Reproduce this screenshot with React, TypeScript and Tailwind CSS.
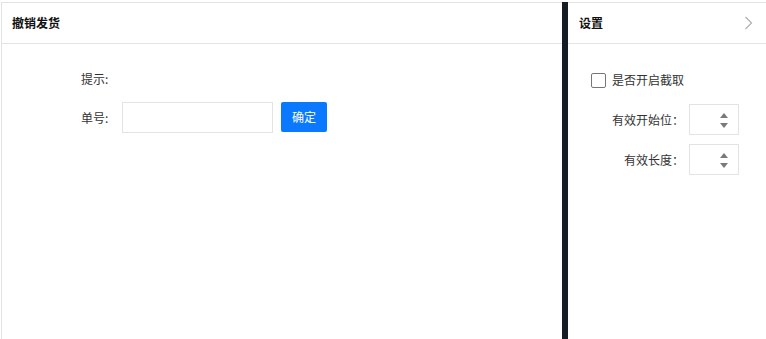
import React from 'react';

const FONT = '"Noto Sans CJK SC", "Liberation Sans", sans-serif';

function NumberBox() {
  return (
    <div className="relative h-[31px] w-[50px] border border-[#e3e3e3] bg-white">
      <div className="absolute right-[10px] top-[8px] flex flex-col items-center gap-[5px]">
        <svg width="8" height="5" viewBox="0 0 8 5">
          <path d="M4 0 L8 5 L0 5 Z" fill="#7a7a7a" />
        </svg>
        <svg width="8" height="5" viewBox="0 0 8 5">
          <path d="M0 0 L8 0 L4 5 Z" fill="#7a7a7a" />
        </svg>
      </div>
    </div>
  );
}

export default function App() {
  return (
    <div
      className="flex h-[339px] w-[766px] overflow-hidden bg-white pl-[1px] pt-[2px] text-[12px] text-[#333]"
      style={{ fontFamily: FONT }}
    >
      {/* left: cancel shipment */}
      <div className="flex w-[561px] flex-col border-l border-t border-[#e3e3e3]">
        <div className="flex h-[41px] items-center border-b border-[#e3e3e3] pl-[10px] font-bold text-[#111]">
          撤销发货
        </div>
        <div className="flex flex-col pl-[79px] pt-[26px]">
          <div className="flex h-[18px] items-center">提示:</div>
          <div className="mt-[14px] flex items-center">
            <span className="w-[41px]">单号:</span>
            <div className="h-[31px] w-[151px] border border-[#e3e3e3]" />
            <button className="ml-[8px] h-[30px] w-[46px] self-start rounded-[2px] bg-[#0a78ff] text-white">
              确定
            </button>
          </div>
        </div>
      </div>

      <div className="w-[6px] bg-[#141c24]" />

      {/* right: settings */}
      <div className="flex w-[198px] flex-col border-t border-[#e3e3e3]">
        <div className="flex h-[41px] items-center justify-between border-b border-[#e3e3e3] pl-[11px] pr-[13px] font-bold text-[#111]">
          <span>设置</span>
          <svg width="9" height="14" viewBox="0 0 9 14">
            <path d="M1.5 1 L7.5 7 L1.5 13" fill="none" stroke="#b0b0b0" strokeWidth="1.2" />
          </svg>
        </div>
        <div className="flex flex-col pt-[27px]">
          <label className="flex items-center pl-[23px]">
            <span className="h-[15px] w-[15px] rounded-[2px] border border-[#767676] bg-white" />
            <span className="ml-[6px]">是否开启截取</span>
          </label>
          <div className="mt-[15px] flex flex-col gap-[9px] pr-[27px]">
            <div className="flex items-center justify-end gap-[5px]">
              <span>有效开始位：</span>
              <NumberBox />
            </div>
            <div className="flex items-center justify-end gap-[5px]">
              <span>有效长度：</span>
              <NumberBox />
            </div>
          </div>
        </div>
      </div>
    </div>
  );
}
